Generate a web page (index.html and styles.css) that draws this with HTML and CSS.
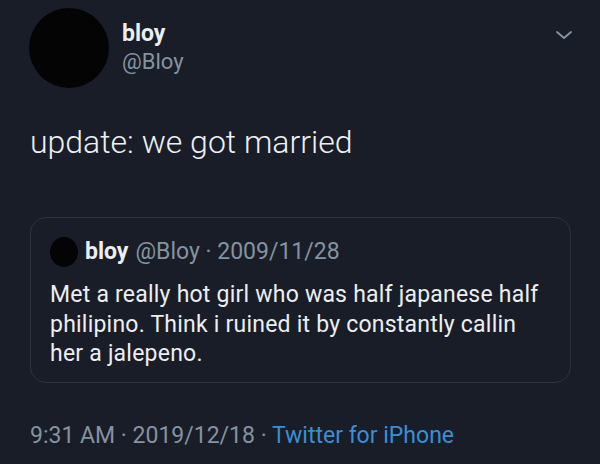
FILE: index.html
```html
<!DOCTYPE html>
<html>
<head>
<meta charset="utf-8">
<link rel="stylesheet" href="styles.css">
</head>
<body>
<div class="tweet">
  <div class="header">
    <div class="avatar"></div>
    <div class="names">
      <div class="name">bloy</div>
      <div class="handle">@Bloy</div>
    </div>
    <svg class="chevron" width="18" height="10" viewBox="0 0 18 10"><path d="M2 2 L9 8 L16 2" fill="none" stroke="#8a97a3" stroke-width="1.8" stroke-linecap="round" stroke-linejoin="round"/></svg>
  </div>
  <div class="text">update: we got married</div>
  <div class="quote">
    <div class="qhead">
      <div class="qavatar"></div>
      <span class="qname">bloy</span>
      <span class="qmeta">@Bloy · 2009/11/28</span>
    </div>
    <div class="qtext">Met a really hot girl who was half japanese half philipino. Think i ruined it by constantly callin her a jalepeno.</div>
  </div>
  <div class="footer">9:31 AM · 2019/12/18 · <span class="source">Twitter for iPhone</span></div>
</div>
</body>
</html>
```
FILE: styles.css
```css
html, body {
  margin: 0;
  padding: 0;
  background: #181d28;
  width: 600px;
  height: 464px;
  overflow: hidden;
}
.tweet {
  font-family: Roboto, "Liberation Sans", sans-serif;
  padding: 8px 29px 0 30px;
  color: #e6e8ea;
}
.header {
  display: flex;
  align-items: flex-start;
}
.avatar {
  width: 80px;
  height: 80px;
  border-radius: 50%;
  background: #040405;
  margin-left: -1px;
  flex: none;
}
.names {
  margin-left: 13px;
  padding-top: 12px;
  flex: 1;
}
.name {
  font-weight: 700;
  font-size: 23px;
  line-height: 28px;
  color: #eceef0;
}
.handle {
  font-size: 22px;
  line-height: 28px;
  color: #8593a0;
}
.chevron {
  margin-top: 22px;
  margin-right: -2px;
}
.text {
  margin-top: 35px;
  font-size: 32px;
  font-weight: 300;
  line-height: 38px;
  color: #eef0f2;
}
.quote {
  margin-top: 56px;
  margin-right: 0;
  border: 1px solid #2d333e;
  border-radius: 16px;
  padding: 19px 19px 13px 19px;
}
.qhead {
  display: flex;
  align-items: center;
  font-size: 23px;
  line-height: 28px;
}
.qavatar {
  width: 28px;
  height: 30px;
  border-radius: 50%;
  background: #040405;
  margin-right: 7px;
  flex: none;
}
.qname {
  font-weight: 700;
  color: #eceef0;
  margin-right: 7px;
}
.qmeta {
  color: #8593a0;
}
.qtext {
  margin-top: 13px;
  font-size: 23px;
  line-height: 29.5px;
  letter-spacing: 0.22px;
  color: #eceef0;
}
.footer {
  margin-top: 39px;
  font-size: 23px;
  line-height: 28px;
  color: #8593a0;
}
.source {
  color: #3a8fd2;
}
```
